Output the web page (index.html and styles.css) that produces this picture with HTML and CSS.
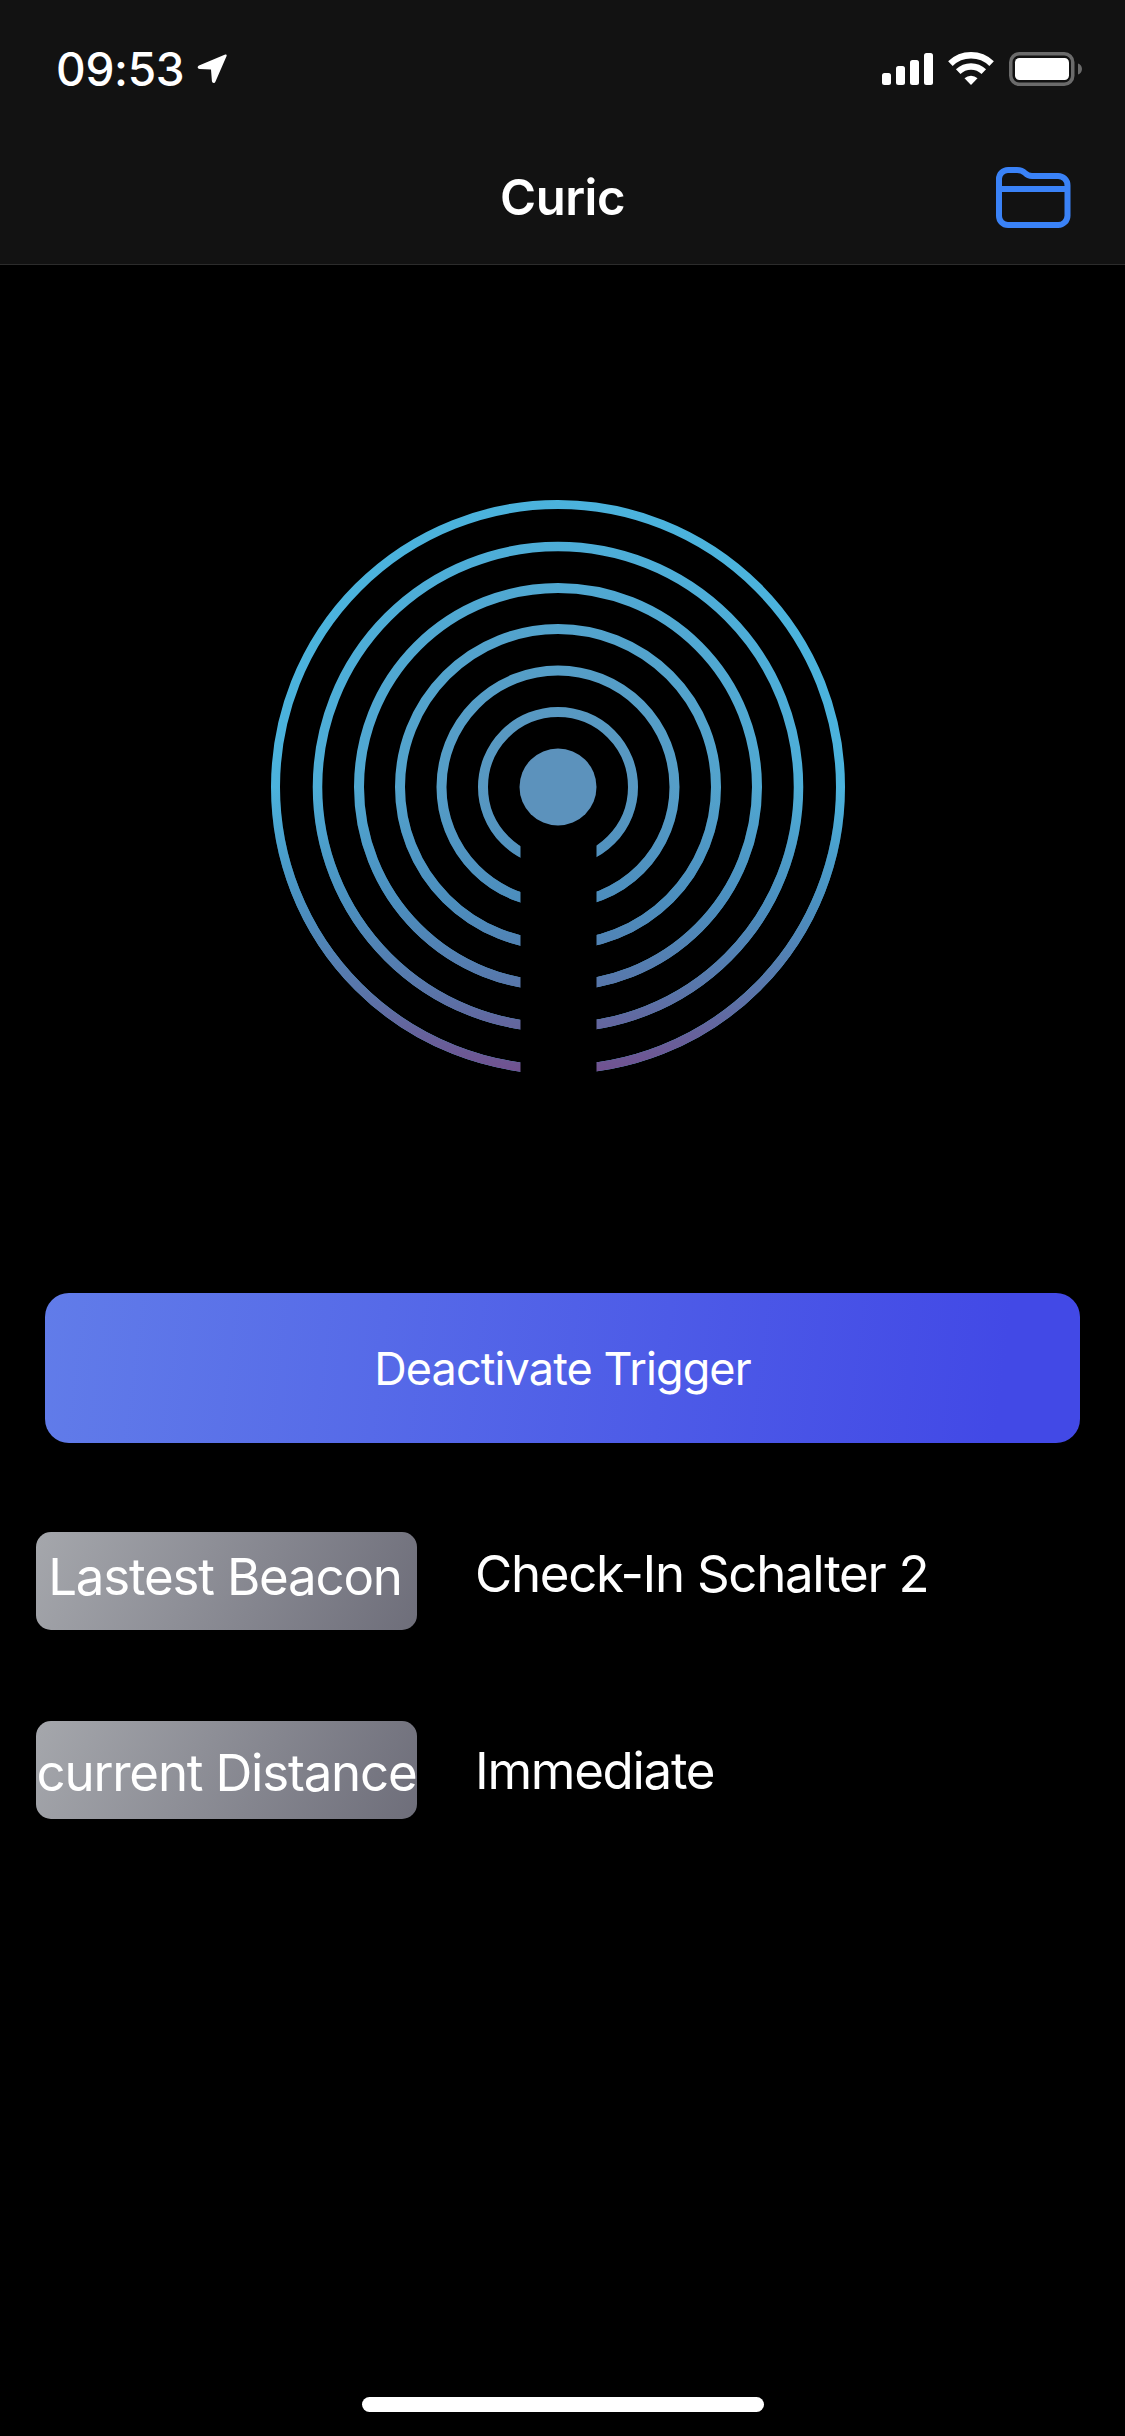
FILE: index.html
```html
<!DOCTYPE html>
<html lang="en">
<head>
<meta charset="utf-8">
<title>Curic</title>
<link rel="stylesheet" href="styles.css">
</head>
<body>
<div class="page">
  <header class="top">
    <div class="status">
      <div class="status-left">
        <span class="time">09:53</span>
        <svg class="loc" viewBox="0 0 30 30"><path d="M28.2 .6 2 11.6c-2 .9-1.6 3.3.6 3.4l11.4.6.9 11.5c.2 2.2 2.7 2.6 3.5.6L29.6 2c.4-1-.4-1.8-1.4-1.4Z" fill="#fff"/></svg>
      </div>
      <div class="status-right">
        <svg class="signal" viewBox="0 0 51 32"><rect x="0" y="20" width="9" height="12" rx="2.5"/><rect x="14" y="13" width="9" height="19" rx="2.5"/><rect x="28" y="7" width="9" height="25" rx="2.5"/><rect x="42" y="0" width="9" height="32" rx="2.5"/></svg>
        <svg class="wifi" viewBox="0 0 46 33"><path class="wifi-arc" d="M2.4 11.6A29.7 29.7 0 0 1 43.6 11.6"/><path class="wifi-arc" d="M10.2 19.7A18.5 18.5 0 0 1 35.8 19.7"/><path d="M23 33 16.5 26.3A9.3 9.3 0 0 1 29.5 26.3Z" fill="#fff"/></svg>
        <svg class="battery" viewBox="0 0 73 34"><rect x="1.75" y="1.75" width="62" height="30.5" rx="8.5" fill="none" stroke="#6b6b6b" stroke-width="3.5"/><rect x="6" y="6" width="54" height="22" rx="4.5" fill="#fff"/><path d="M69 11.5c2.400.7 4 3 4 5.500s-1.600 4.800-4 5.500Z" fill="#6b6b6b"/></svg>
      </div>
    </div>
    <nav class="nav">
      <h1 class="title">Curic</h1>
      <svg class="folder" viewBox="0 0 75 61"><path d="M12 3H21C25 3 27 4 29 6C31 8 33 9 36 9H62A9.400 9.400 0 0 1 71.500 18.400V48.500A9.400 9.400 0 0 1 62 58H12A9 9 0 0 1 3 49V12A9 9 0 0 1 12 3Z"/><path d="M3 22H71.500"/></svg>
    </nav>
  </header>

  <main class="main">
    <svg class="beacon" viewBox="0 0 584 574">
      <defs>
        <radialGradient id="base" gradientUnits="userSpaceOnUse" cx="292" cy="287" r="287">
          <stop offset="0" stop-color="#5c8fb8"/>
          <stop offset="1" stop-color="#4bb3dd"/>
        </radialGradient>
        <linearGradient id="tint" gradientUnits="userSpaceOnUse" x1="0" y1="287" x2="0" y2="574">
          <stop offset="0" stop-color="#4a8abb" stop-opacity="0"/>
          <stop offset=".4" stop-color="#4a8abb" stop-opacity=".85"/>
          <stop offset=".72" stop-color="#5a74a8" stop-opacity="1"/>
          <stop offset="1" stop-color="#72508f" stop-opacity="1"/>
        </linearGradient>
        <g id="rings" fill="none">
          <circle cx="292" cy="287" r="282.500" stroke-width="9"/>
          <circle cx="292" cy="287" r="240.500" stroke-width="9.500"/>
          <circle cx="292" cy="287" r="199" stroke-width="10"/>
          <circle cx="292" cy="287" r="158" stroke-width="10"/>
          <circle cx="292" cy="287" r="116.500" stroke-width="10"/>
          <circle cx="292" cy="287" r="75" stroke-width="10"/>
        </g>
      </defs>
      <use href="#rings" stroke="url(#base)"/>
      <use href="#rings" stroke="url(#tint)"/>
      <rect x="254.500" y="325" width="76" height="249" fill="#000"/>
      <circle cx="292" cy="287" r="38.500" fill="#5c92bc"/>
    </svg>

    <button class="action">Deactivate Trigger</button>

    <section class="info">
      <div class="row row-beacon">
        <div class="tag">Lastest Beacon</div>
        <div class="value">Check-In Schalter 2</div>
      </div>
      <div class="row row-distance">
        <div class="tag">current Distance</div>
        <div class="value">Immediate</div>
      </div>
    </section>
  </main>

  <div class="home"></div>
</div>
</body>
</html>
```

FILE: styles.css
```css
* { box-sizing: border-box; }
html, body { margin: 0; padding: 0; background: #000; }
body { font-family: Inter, "Liberation Sans", sans-serif; color: #fff; }
.page { width: 1125px; height: 2436px; display: flex; flex-direction: column; background: #000; overflow: hidden; }

.top { height: 265px; background: #121212; border-bottom: 1px solid #2c2c2c; flex: none; }
.status { height: 136px; padding: 52px 43px 0 56px; display: flex; justify-content: space-between; align-items: flex-start; }
.status-left { display: flex; align-items: center; height: 34px; }
.time { font-size: 46px; font-weight: 500; line-height: 34px; letter-spacing: -.3px; }
.loc { width: 30px; height: 30px; margin-left: 13px; }
.status-right { display: flex; align-items: flex-start; height: 34px; }
.signal { width: 51px; height: 32px; margin-top: 1px; fill: #fff; }
.wifi { width: 46px; height: 33px; margin-left: 15px; }
.wifi-arc { fill: none; stroke: #fff; stroke-width: 6.500; }
.battery { width: 73px; height: 34px; margin-left: 15px; }

.nav { height: 128px; position: relative; display: flex; justify-content: flex-end; padding: 31px 54px 0 0; }
.title { position: absolute; left: 0; right: 0; top: 32px; margin: 0; text-align: center; font-size: 49px; line-height: 60px; font-weight: 600; letter-spacing: -.5px; }
.folder { width: 75px; height: 61px; fill: none; stroke: #3a82f7; stroke-width: 6; stroke-linejoin: round; }

.main { display: flex; flex-direction: column; flex: none; }
.beacon { width: 584px; height: 574px; margin: 235px 0 0 266px; flex: none; }
.action { width: 1035px; height: 150px; margin: 219px 0 0 45px; border: 0; border-radius: 24px; padding: 0; color: #fff; background: linear-gradient(97deg, #617ce9 0%, #4249e6 92%); font-family: inherit; font-size: 45px; letter-spacing: -.9px; }

.info { display: flex; flex-direction: column; gap: 91px; margin: 89px 0 0 36px; }
.row { display: grid; grid-template-columns: 381px auto; column-gap: 58px; align-items: start; }
.tag { height: 98px; border-radius: 15px; background: linear-gradient(115deg, #a5a7ac 0%, #6e6e7a 100%); display: flex; align-items: center; justify-content: center; font-size: 51px; line-height: 60px; white-space: nowrap; overflow: hidden; letter-spacing: -1.200px; }
.row-beacon .tag { padding: 0 3px 8px 0; }
.row-distance .tag { padding-top: 6px; }
.value { font-size: 51px; letter-spacing: -1.300px; }
.row-beacon .value { line-height: 84px; }
.row-distance .value { line-height: 100px; }

.home { width: 402px; height: 15px; border-radius: 8px; background: #fff; margin: auto 0 24px 362px; flex: none; }
```
